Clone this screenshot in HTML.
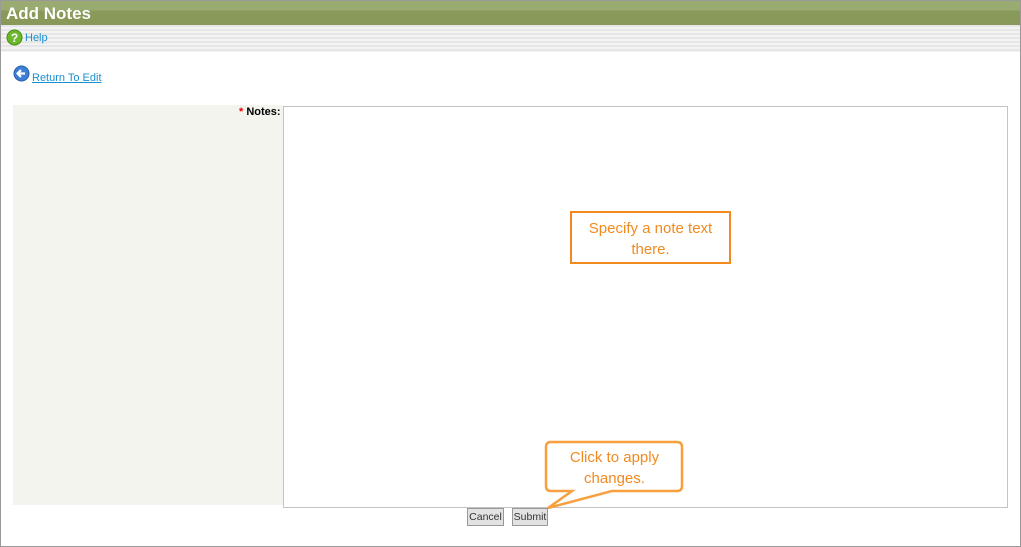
<!DOCTYPE html>
<html><head><style>
body{margin:0;width:1021px;height:547px;position:relative;background:#fff;font-family:"Liberation Sans",sans-serif;overflow:hidden}
.frame{position:absolute;left:0;top:0;width:1019px;height:545px;border:1px solid #999}
.hdr{position:absolute;left:1px;top:1px;width:1019px;height:24px;background:linear-gradient(#9aab72 0,#9aab72 9px,#88995a 10px,#88995a 100%)}
.hdr span{position:absolute;left:5px;top:3px;color:#fff;font-weight:bold;font-size:17px}
.tb{position:absolute;left:1px;top:25px;width:1019px;height:27px;background:repeating-linear-gradient(#e6e6e6 0,#e6e6e6 2px,#f3f3f3 2px,#f3f3f3 4px)}
a{color:#1a8fd0;font-size:11px}
.side{position:absolute;left:13px;top:105px;width:270px;height:400px;background:#f4f4ef}
.ta{position:absolute;left:283px;top:106px;width:723px;height:400px;border:1px solid #c4c4c4}
.btn{position:absolute;top:508px;height:16px;border:1px solid #999;background:#e2e2e2;font-size:10.5px;color:#333;line-height:16px;text-align:center}
.o{color:#f28a20;font-family:"Liberation Sans",sans-serif;font-size:15px;text-align:center;line-height:21px}
</style></head><body>
<div class="frame"></div>
<div class="hdr"><span>Add Notes</span></div>
<div class="tb">
<svg style="position:absolute;left:5px;top:4px" width="17" height="17"><circle cx="8.5" cy="8.5" r="7.5" fill="#6cb82a" stroke="#4a8a1a"/><text x="8.5" y="13" font-size="12" font-weight="bold" fill="#fff" text-anchor="middle" font-family="Liberation Sans">?</text></svg>
<a style="position:absolute;left:24px;top:7px;text-decoration:none">Help</a></div>
<svg style="position:absolute;left:13px;top:65px" width="17" height="17"><circle cx="8.5" cy="8.5" r="7.5" fill="#3d7fd8" stroke="#2a5fa8"/><path d="M12 8.5H5M8 5L4.5 8.5 8 12" stroke="#fff" stroke-width="2.2" fill="none"/></svg>
<a href="#" style="position:absolute;left:32px;top:72px">Return To Edit</a>
<div class="side"></div>
<div style="position:absolute;left:239px;top:106px;font-size:11px;font-weight:bold"><span style="color:#e00">*</span> Notes:</div>
<div class="ta"></div>
<div class="o" style="position:absolute;left:570px;top:211px;width:157px;border:2px solid #f28a20;padding-top:5px;height:44px;box-sizing:content-box">Specify a note text there.</div>
<svg style="position:absolute;left:540px;top:438px" width="150" height="75"><path d="M10 4H137Q142 4 142 9V48Q142 53 137 53H72L8 70 32 53H11Q6 53 6 48V9Q6 4 11 4Z" fill="#fff" stroke="#f7a040" stroke-width="2.5"/></svg>
<div class="o" style="position:absolute;left:548px;top:447px;width:133px">Click to apply changes.</div>
<div class="btn" style="left:467px;width:35px">Cancel</div>
<div class="btn" style="left:512px;width:34px">Submit</div>
</body></html>
